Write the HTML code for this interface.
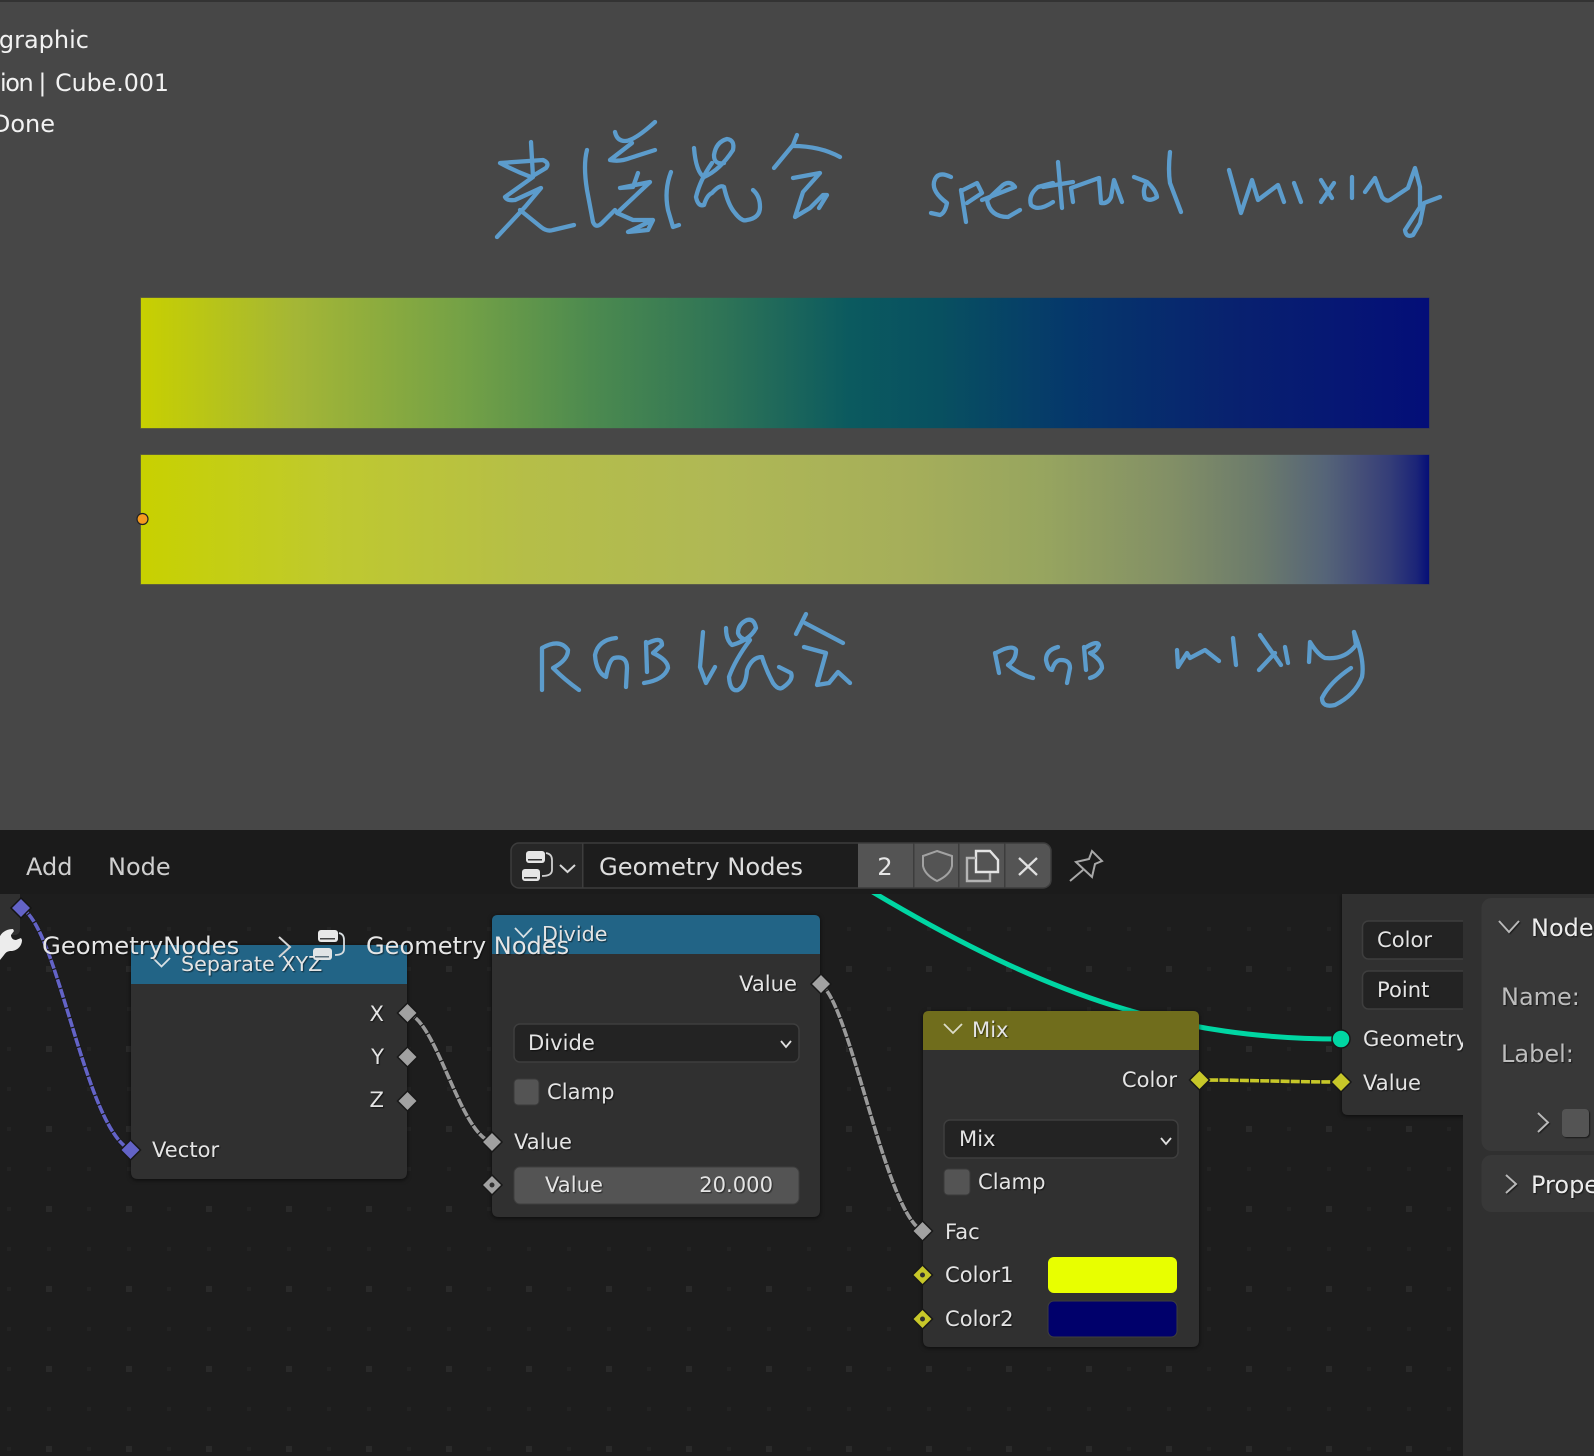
<!DOCTYPE html>
<html lang="en">
<head>
<meta charset="utf-8">
<title>Spectral mixing vs RGB mixing</title>
<style>
html,body{margin:0;padding:0;background:#474747;width:1594px;height:1456px;overflow:hidden}
svg{display:block;position:absolute;left:0;top:0}
text{font-family:"DejaVu Sans","Liberation Sans",sans-serif}
.n text,.n{font-size:21.100px;fill:#e4e4e4}
.n text.t{font-size:20.700px}
.sh{filter:drop-shadow(1px 1px 0.6px rgba(0,0,0,.55))}
.body{filter:drop-shadow(0 1px 2px rgba(0,0,0,.65))}
.hw{fill:none;stroke:#5c9ccc;stroke-width:4.300;stroke-linecap:round;stroke-linejoin:round}
</style>
</head>
<body>
<svg width="1594" height="1456" viewBox="0 0 1594 1456" xmlns="http://www.w3.org/2000/svg">
<defs>
<linearGradient id="g1" gradientUnits="userSpaceOnUse" x1="141" y1="0" x2="1429" y2="0">
<stop offset="0" stop-color="#c8d000"/><stop offset=".12" stop-color="#a4b636"/><stop offset=".25" stop-color="#74a146"/><stop offset=".35" stop-color="#4c8a4f"/><stop offset=".45" stop-color="#2f7456"/><stop offset=".55" stop-color="#0b5a5f"/><stop offset=".62" stop-color="#085060"/><stop offset=".72" stop-color="#05386b"/><stop offset=".85" stop-color="#08216f"/><stop offset="1" stop-color="#040e78"/>
</linearGradient>
<linearGradient id="g2" gradientUnits="userSpaceOnUse" x1="141" y1="0" x2="1429" y2="0">
<stop offset="0" stop-color="#c8d000"/><stop offset=".05" stop-color="#c5cf10"/><stop offset=".15" stop-color="#bfc92f"/><stop offset=".3" stop-color="#b5be48"/><stop offset=".45" stop-color="#afb855"/><stop offset=".6" stop-color="#a5ae5a"/><stop offset=".7" stop-color="#97a55f"/><stop offset=".8" stop-color="#828f66"/><stop offset=".87" stop-color="#6b7a6c"/><stop offset=".92" stop-color="#556478"/><stop offset=".95" stop-color="#434c78"/><stop offset=".97" stop-color="#343d78"/><stop offset=".99" stop-color="#1c2578"/><stop offset="1" stop-color="#050f78"/>
</linearGradient>
<pattern id="small" patternUnits="userSpaceOnUse" x="0" y="0" width="40" height="40"><rect x="7" y="7" width="4" height="4" fill="#232323"/></pattern>
<pattern id="big" patternUnits="userSpaceOnUse" x="0" y="0" width="80" height="80"><rect x="46" y="6" width="6" height="6" fill="#2a2a2a"/></pattern>
<clipPath id="wclip"><rect x="511" y="843" width="540" height="45" rx="8"/></clipPath>
</defs>

<!-- viewport -->
<rect x="0" y="0" width="1594" height="830" fill="#474747"/>
<rect x="0" y="0" width="1594" height="2" fill="#333"/>
<g font-size="24" fill="#f2f2f2">
<text x="89" y="48" text-anchor="end">graphic</text>
<text x="46.500" y="91" text-anchor="end" textLength="46.500" lengthAdjust="spacing">ion |</text>
<text x="169" y="91" text-anchor="end" font-size="23.700">Cube.001</text>
<text x="55" y="132" text-anchor="end">Done</text>
</g>

<!-- colour bars -->
<rect x="141" y="298" width="1288" height="130" fill="url(#g1)" stroke="url(#g1)" stroke-opacity=".3" stroke-width="1.200"/>
<rect x="141" y="455" width="1288" height="129" fill="url(#g2)" stroke="url(#g2)" stroke-opacity=".3" stroke-width="1.200"/>
<circle cx="142.500" cy="519" r="5.500" fill="#f59a1f" stroke="#222" stroke-width="1.200"/>

<!-- handwriting: spectral chinese -->
<g class="hw">
<path d="M500 163 L543 160 Q550 163 546 168 L531 177 Q515 171 500 163"/>
<path d="M531 142 L533 177 L505 197 Q507 201 515 200 L541 188 L525 207 L497 237"/>
<path d="M520 210 L541 227 Q547 232 553 230 L574 225"/>
<path d="M587 150 Q583 165 587 190 L593 222 Q596 229 602 223 L615 210"/>
<path d="M615 132 Q617 141 625 141 Q634 141 655 122"/>
<path d="M632 143 L610 160 Q620 162 630 158 L655 150"/>
<path d="M638 173 L633 187 L620 188 L650 182 L617 213 L633 220 L653 220 L628 232 L648 230 L653 220"/>
<path d="M671 172 Q664 190 668 210 L673 227 L679 225"/>
<path d="M694 148 Q696 172 704 177 Q720 170 733 150 Q735 140 727 139 Q716 142 714 155 Q714 165 724 163"/>
<path d="M712 163 Q700 180 696 197 Q698 207 704 205 Q707 195 712 193 Q720 184 724 187 Q728 205 735 213 Q742 222 747 220 Q760 218 760 207 Q760 196 753 190"/>
<path d="M797 135 L793 145 L774 168"/>
<path d="M793 146 Q820 146 840 157"/>
<path d="M793 178 L820 173 L803 192 L795 217 L810 208 L823 195 L827 195 L819 208"/>
</g>
<!-- handwriting: spectral mixing -->
<g class="hw">
<path d="M951 177 Q937 170 934 182 Q932 192 947 203 Q945 213 940 215 L931 213"/>
<path d="M961 190 L966 222"/>
<path d="M963 190 L977 183 L982 193 L967 203"/>
<path d="M982 200 L1015 187 Q1010 180 1003 185 L987 200 Q990 217 1008 217 L1020 210"/>
<path d="M1053 183 L1038 187 Q1028 195 1031 205 Q1038 212 1053 202"/>
<path d="M1058 162 L1062 208"/>
<path d="M1043 187 L1073 182"/>
<path d="M1073 202 L1071 188 L1099 178 L1101 203 Q1108 204 1111 197 L1114 180 L1122 202"/>
<path d="M1134 177 L1147 182 Q1156 190 1157 197 Q1150 202 1145 198 Q1142 190 1147 182"/>
<path d="M1170 152 Q1168 170 1170 183 L1181 212"/>
<path d="M1229 170 L1241 213 L1252 180 L1258 200 L1278 185 L1284 202"/>
<path d="M1294 183 L1301 202"/>
<path d="M1321 180 L1332 198"/>
<path d="M1334 183 L1321 202"/>
<path d="M1352 177 L1352 198"/>
<path d="M1365 192 L1375 178 L1382 197 Q1386 202 1390 200 L1408 188 L1415 168 L1420 187 L1420 207 L1405 230 Q1406 238 1413 235 L1420 223 L1424 203 L1440 197"/>
</g>
<!-- handwriting: rgb chinese -->
<g class="hw">
<path d="M542 690 L542 648 Q560 638 568 650 Q568 660 553 668 Q565 680 579 690"/>
<path d="M616 638 Q598 640 595 655 Q596 672 606 677 Q609 660 614 658 Q627 655 627 668 L626 687"/>
<path d="M646 642 L647 672"/>
<path d="M648 643 Q662 636 662 645 L653 653 Q668 660 668 668 Q664 680 644 683"/>
<path d="M703 632 L700 667 L706 683 L715 667"/>
<path d="M726 628 Q726 640 732 645 Q750 640 756 628 Q754 618 747 620 Q738 624 738 633 Q740 640 750 640 Q735 660 729 677 Q730 692 738 690 Q746 686 747 670 Q752 657 762 657 Q766 670 773 683 Q778 690 782 688 Q794 680 791 673 L779 667"/>
<path d="M806 614 L796 634"/>
<path d="M805 623 L843 643"/>
<path d="M804 647 L826 653 L817 685 L829 683 L838 672 L850 683"/>
</g>
<!-- handwriting: rgb mixing -->
<g class="hw">
<path d="M995 653 L999 673"/>
<path d="M996 653 Q1012 644 1016 650 Q1016 660 1008 665 Q1020 675 1033 678"/>
<path d="M1058 647 Q1046 650 1046 660 Q1048 670 1052 670 Q1055 660 1061 660 Q1070 660 1070 668 L1067 683"/>
<path d="M1084 647 L1086 670"/>
<path d="M1085 648 Q1097 640 1099 645 Q1096 652 1090 653 Q1102 660 1102 668 Q1098 676 1090 678"/>
<path d="M1177 650 L1178 667 L1187 653 L1190 658 L1205 650 L1219 661"/>
<path d="M1233 638 L1236 665"/>
<path d="M1260 635 L1281 665"/>
<path d="M1275 653 L1259 670"/>
<path d="M1285 647 L1288 663"/>
<path d="M1309 662 L1310 642 Q1318 655 1325 658 Q1345 660 1356 645 L1354 632"/>
<path d="M1354 632 Q1365 660 1362 677 Q1355 695 1335 705 Q1322 708 1322 698 Q1330 682 1351 668"/>
</g>

<!-- node editor -->
<rect x="0" y="830" width="1594" height="626" fill="#1d1d1d"/>
<rect x="0" y="894" width="1594" height="562" fill="url(#small)"/>
<rect x="0" y="894" width="1594" height="562" fill="url(#big)"/>

<!-- links -->
<g fill="none">
<path d="M866 888 C1052 1000 1180 1039 1341 1039" stroke="#00d6a3" stroke-width="5"/>
<path d="M21 908 C58 925 85 1130 131 1150" stroke="#1a1a1a" stroke-width="5"/>
<path d="M21 908 C58 925 85 1130 131 1150" stroke="#6363c7" stroke-width="3.600" stroke-dasharray="9 1.200"/>
<path d="M407 1013 C437 1020 460 1135 492 1142" stroke="#1a1a1a" stroke-width="5"/>
<path d="M407 1013 C437 1020 460 1135 492 1142" stroke="#9a9a9a" stroke-width="3.600" stroke-dasharray="9 1.200"/>
<path d="M820 984 C850 1000 885 1215 923 1231" stroke="#1a1a1a" stroke-width="5"/>
<path d="M820 984 C850 1000 885 1215 923 1231" stroke="#9a9a9a" stroke-width="3.600" stroke-dasharray="9 1.200"/>
<path d="M1199 1080 C1250 1080 1290 1082 1343 1082" stroke="#1a1a1a" stroke-width="5"/>
<path d="M1199 1080 C1250 1080 1290 1082 1343 1082" stroke="#c7c729" stroke-width="3.600" stroke-dasharray="9 1.200"/>
</g>

<!-- top-left stub node -->
<path d="M0 894 H20 V929 Q20 935 14 935 H0 Z" fill="#303030"/>
<polygon points="21,898 31,908 21,918 11,908" fill="#6363c7" stroke="#141414" stroke-width="1.500"/>

<!-- Separate XYZ -->
<g class="n">
<path class="body" d="M131 945 H407 V1172 Q407 1179 400 1179 H138 Q131 1179 131 1172 Z" fill="#303030"/>
<rect x="131" y="945" width="276" height="39" fill="#226486"/>
<path d="M153 958 L161.500 966.500 L170 958" fill="none" stroke="#d8e0e4" stroke-width="1.800"/>
<g class="sh">
<text class="t" x="181" y="971">Separate XYZ</text>
<text x="384" y="1021" text-anchor="end">X</text>
<text x="384" y="1064" text-anchor="end">Y</text>
<text x="384" y="1107" text-anchor="end">Z</text>
<text x="152" y="1157">Vector</text>
</g>
<g stroke="#181818" stroke-width="1.500" fill="#a1a1a1">
<polygon points="407.500,1003 417.500,1013 407.500,1023 397.500,1013"/>
<polygon points="407.500,1047 417.500,1057 407.500,1067 397.500,1057"/>
<polygon points="407.500,1091 417.500,1101 407.500,1111 397.500,1101"/>
</g>
<polygon points="130.500,1140 140.500,1150 130.500,1160 120.500,1150" fill="#6363c7" stroke="#181818" stroke-width="1.500"/>
</g>

<!-- Divide -->
<g class="n">
<path class="body" d="M492 921 Q492 915 498 915 H814 Q820 915 820 921 V1210 Q820 1217 813 1217 H499 Q492 1217 492 1210 Z" fill="#303030"/>
<path d="M492 921 Q492 915 498 915 H814 Q820 915 820 921 V954 H492 Z" fill="#226486"/>
<path d="M515 928 L523.500 937 L532 928" fill="none" stroke="#d8e0e4" stroke-width="1.800"/>
<rect x="514" y="1024" width="285" height="38" rx="6" fill="#232323" stroke="#3e3e3e" stroke-width="1.500"/>
<path d="M781 1041 L786 1047 L791 1041" fill="none" stroke="#e0e0e0" stroke-width="1.800"/>
<rect x="514" y="1079" width="25" height="26" rx="4" fill="#545454" stroke="#3a3a3a" stroke-width="1"/>
<rect x="514" y="1167" width="285" height="37" rx="6" fill="#545454" stroke="#3e3e3e" stroke-width="1"/>
<g class="sh">
<text class="t" x="542" y="941" fill="#c6d6de">Divide</text>
<text x="797" y="991" text-anchor="end">Value</text>
<text x="528" y="1050">Divide</text>
<text x="547" y="1099">Clamp</text>
<text x="514" y="1149">Value</text>
<text x="545" y="1192">Value</text>
<text x="773" y="1192" text-anchor="end">20.000</text>
</g>
<g stroke="#181818" stroke-width="1.500" fill="#a1a1a1">
<polygon points="821,974 831,984 821,994 811,984"/>
<polygon points="492,1132 502,1142 492,1152 482,1142"/>
<polygon points="492,1175 502,1185 492,1195 482,1185"/>
</g>
<circle cx="492" cy="1185" r="2.500" fill="#303030"/>
</g>

<!-- Mix -->
<g class="n">
<path class="body" d="M923 1017 Q923 1011 929 1011 H1193 Q1199 1011 1199 1017 V1340 Q1199 1347 1192 1347 H930 Q923 1347 923 1340 Z" fill="#303030"/>
<path d="M923 1017 Q923 1011 929 1011 H1193 Q1199 1011 1199 1017 V1050 H923 Z" fill="#706d1c"/>
<path d="M944 1024 L953 1033 L962 1024" fill="none" stroke="#dcdcc8" stroke-width="1.800"/>
<rect x="944" y="1120" width="234" height="38" rx="6" fill="#232323" stroke="#3e3e3e" stroke-width="1.500"/>
<path d="M1161 1138 L1166 1144 L1171 1138" fill="none" stroke="#e0e0e0" stroke-width="1.800"/>
<rect x="944" y="1169" width="26" height="26" rx="4" fill="#545454" stroke="#3a3a3a" stroke-width="1"/>
<rect x="1048" y="1257" width="129" height="36" rx="6" fill="#e8ff00"/>
<rect x="1048" y="1301" width="129" height="36" rx="6" fill="#00006b" stroke="#3e3e3e" stroke-width="1"/>
<g class="sh">
<text x="972" y="1037">Mix</text>
<text x="1177" y="1087" text-anchor="end">Color</text>
<text x="959" y="1146">Mix</text>
<text x="978" y="1189">Clamp</text>
<text x="945" y="1239">Fac</text>
<text x="945" y="1282">Color1</text>
<text x="945" y="1326">Color2</text>
</g>
<polygon points="922.500,1221 932.500,1231 922.500,1241 912.500,1231" fill="#a1a1a1" stroke="#181818" stroke-width="1.500"/>
<g fill="#c7c729" stroke="#181818" stroke-width="1.500">
<polygon points="1199.500,1070 1209.500,1080 1199.500,1090 1189.500,1080"/>
<polygon points="922.500,1265 932.500,1275 922.500,1285 912.500,1275"/>
<polygon points="922.500,1309 932.500,1319 922.500,1329 912.500,1319"/>
</g>
<circle cx="922.500" cy="1275" r="2.500" fill="#303030"/>
<circle cx="922.500" cy="1319" r="2.500" fill="#303030"/>
</g>

<!-- Group Output -->
<g class="n">
<path class="body" d="M1342 894 H1480 V1115 H1348 Q1342 1115 1342 1109 Z" fill="#303030"/>
<rect x="1362.500" y="921" width="130" height="38" rx="6" fill="#232323" stroke="#3e3e3e" stroke-width="1.500"/>
<rect x="1362.500" y="971" width="130" height="38" rx="6" fill="#232323" stroke="#3e3e3e" stroke-width="1.500"/>
<g class="sh">
<text x="1377" y="947">Color</text>
<text x="1377" y="997">Point</text>
<text x="1363" y="1046">Geometry</text>
<text x="1363" y="1090">Value</text>
</g>
<circle cx="1341" cy="1039" r="9" fill="#00d6a3" stroke="#181818" stroke-width="1.500"/>
<polygon points="1341,1072 1351,1082 1341,1092 1331,1082" fill="#c7c729" stroke="#181818" stroke-width="1.500"/>
</g>

<!-- sidebar -->
<rect x="1463" y="894" width="131" height="562" fill="#303030"/>
<rect x="1481.500" y="898" width="140" height="253" rx="10" fill="#383838"/>
<rect x="1481.500" y="1155" width="140" height="57" rx="10" fill="#383838"/>
<g class="sh" font-size="24">
<path d="M1499 921 L1509 932 L1519 921" fill="none" stroke="#b8b8b8" stroke-width="2"/>
<text x="1531" y="936" fill="#ececec">Node</text>
<text x="1501" y="1005" fill="#bdbdbd">Name:</text>
<text x="1501" y="1062" fill="#bdbdbd">Label:</text>
<path d="M1538 1113 L1548 1122.500 L1538 1132" fill="none" stroke="#b8b8b8" stroke-width="2"/>
<rect x="1562" y="1109" width="27" height="28" rx="4" fill="#545454"/>
<path d="M1506 1175 L1516 1184 L1506 1193" fill="none" stroke="#b8b8b8" stroke-width="2"/>
<text x="1531" y="1193" fill="#ececec">Properties</text>
</g>

<!-- header -->
<rect x="0" y="830" width="1594" height="64" fill="#1b1b1b"/>
<g font-size="24" fill="#cfcfcf">
<text x="26" y="875">Add</text>
<text x="108" y="875">Node</text>
</g>
<g clip-path="url(#wclip)">
<rect x="511" y="843" width="71" height="45" fill="#272727"/>
<rect x="582" y="843" width="276" height="45" fill="#1d1d1d"/>
<rect x="858" y="843" width="193" height="45" fill="#545454"/>
<rect x="913" y="843" width="1.500" height="45" fill="#3d3d3d"/>
<rect x="958" y="843" width="1.500" height="45" fill="#3d3d3d"/>
<rect x="1004" y="843" width="1.500" height="45" fill="#3d3d3d"/>
<rect x="582" y="843" width="1.500" height="45" fill="#3d3d3d"/>
</g>
<rect x="511" y="843" width="540" height="45" rx="8" fill="none" stroke="#3d3d3d" stroke-width="1.500"/>
<!-- node tree icon -->
<rect x="526" y="851" width="19" height="12" rx="3" fill="#e6e6e6"/>
<rect x="528" y="859" width="14" height="1.500" fill="#333"/>
<rect x="522" y="869" width="18" height="12" rx="3" fill="#e6e6e6"/>
<rect x="524" y="877" width="13" height="1.500" fill="#333"/>
<path d="M546 853 Q552 854 552 860 V870 Q552 876 542 876" fill="none" stroke="#d0d0d0" stroke-width="1.800"/>
<path d="M560 865 L567.500 872 L575 865" fill="none" stroke="#d8d8d8" stroke-width="2"/>
<text x="599" y="875" font-size="24.200" fill="#dedede">Geometry Nodes</text>
<text x="885" y="875" font-size="24.200" fill="#e6e6e6" text-anchor="middle">2</text>
<path d="M937 851 L952 856 V866 Q950 875 937 881 Q925 875 923 866 V856 Z" fill="none" stroke="#a2a2a2" stroke-width="2"/>
<path d="M976 851 H990 L998 860 V872 H976 Z" fill="none" stroke="#e4e4e4" stroke-width="2.400"/>
<path d="M976 858 H967 V881 H990 V873" fill="none" stroke="#b4b4b4" stroke-width="2.400"/>
<path d="M1019 858 L1037 875 M1037 858 L1019 875" stroke="#e0e0e0" stroke-width="2.300" fill="none"/>
<path d="M1076 862 L1089 859 L1092 851 L1102 861 L1095 864 L1092 877 Z M1070 881 L1083 870" fill="none" stroke="#a8a8a8" stroke-width="2"/>

<!-- breadcrumbs overlay -->
<path d="M0 936 C3 931 8 929 13 929 L14 931 L11 935 C11 938 13 940 16 940 L21 938 L22 940 C22 946 17 951 11 951 C8 951 6 952 4 955 L0 960 Z" fill="#ececec"/>
<g fill="#e6e6e6" class="sh">
<text x="42" y="954" font-size="24.300">GeometryNodes</text>
<text x="366" y="954" font-size="24.100">Geometry Nodes</text>
</g>
<path d="M279 937 L290 947 L279 957" fill="none" stroke="#d4d4d4" stroke-width="2"/>
<rect x="318" y="930" width="20" height="12" rx="3" fill="#e8e8e8"/>
<rect x="320" y="938" width="15" height="1.500" fill="#444"/>
<rect x="313" y="948" width="19" height="12" rx="3" fill="#e0e4e6"/>
<rect x="315" y="956" width="14" height="1.500" fill="#5a6f7c"/>
<path d="M339 933 Q344 934 344 940 V949 Q344 955 335 955" fill="none" stroke="#d8dde0" stroke-width="1.800"/>
</svg>
</body>
</html>
